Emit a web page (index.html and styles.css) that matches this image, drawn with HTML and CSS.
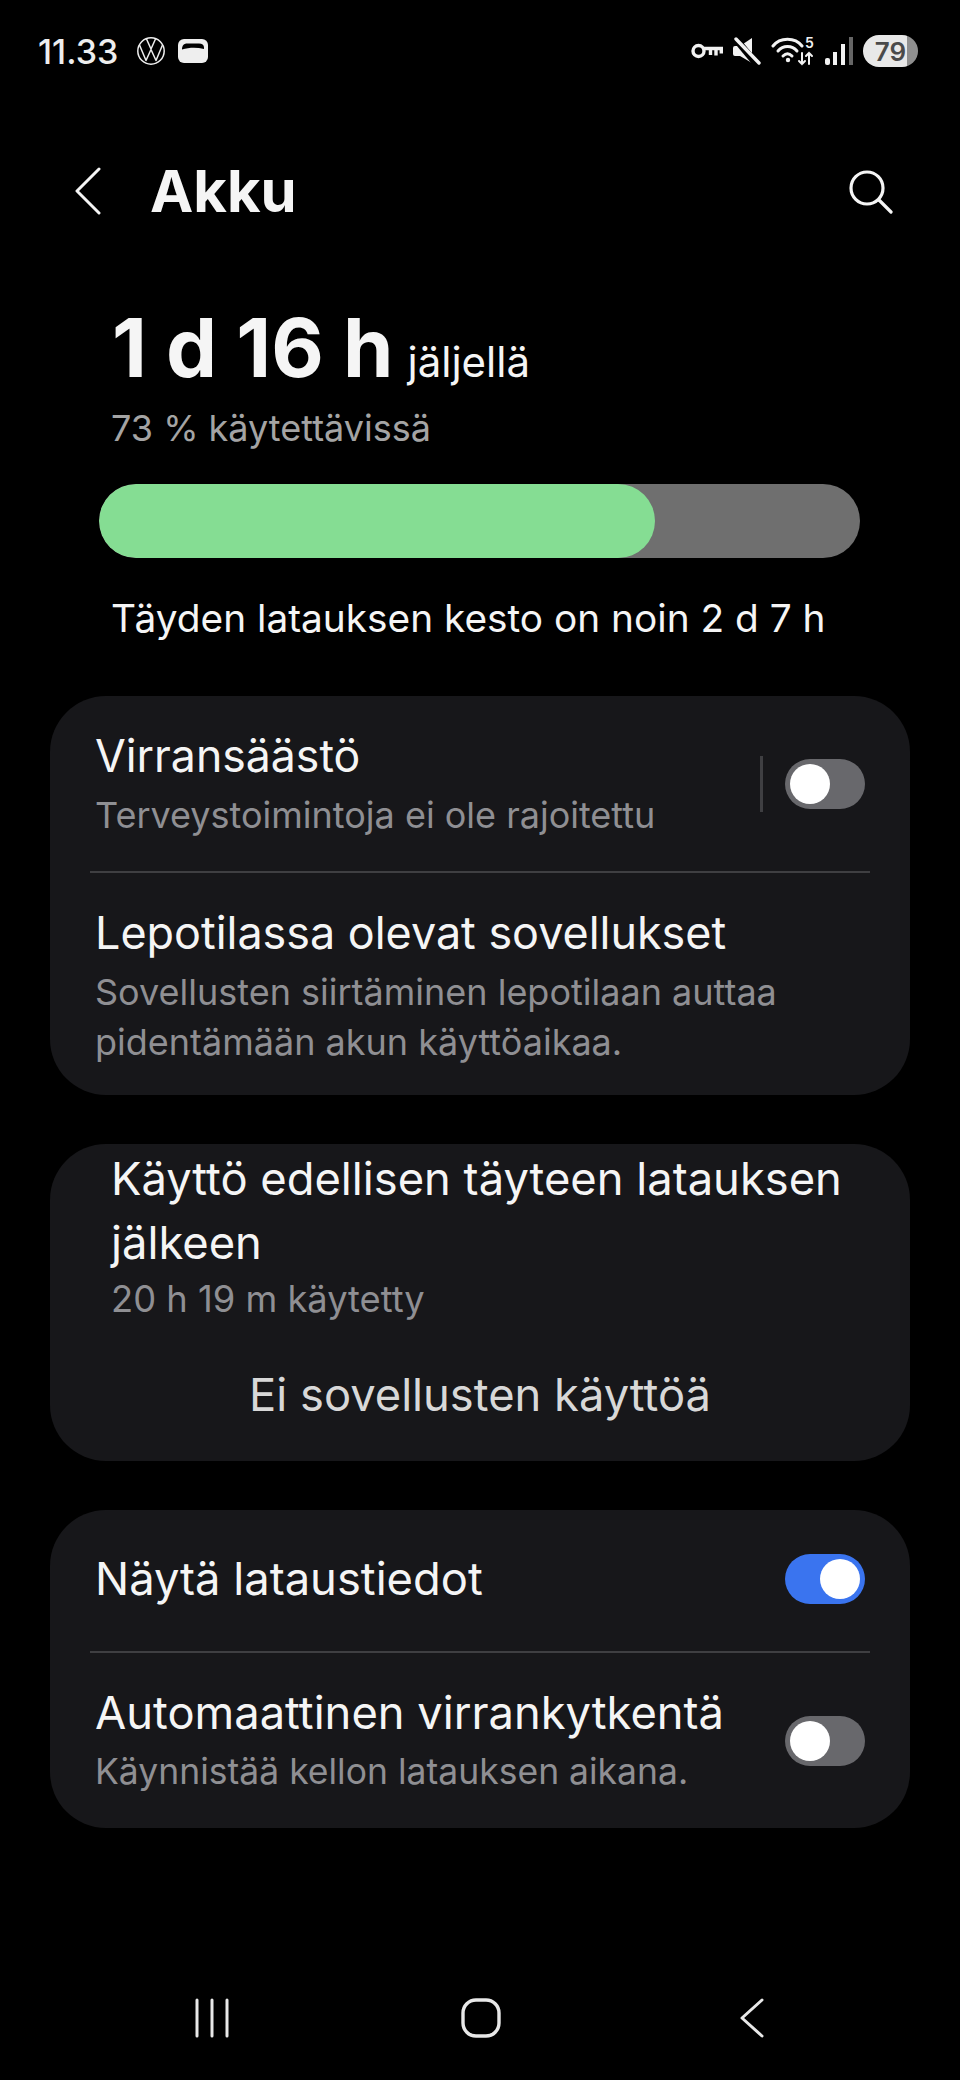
FILE: index.html

```html
<!DOCTYPE html>
<html lang="fi">
<head>
  <meta charset="UTF-8" />
  <meta name="viewport" content="width=device-width, initial-scale=1.0"/>
  <title>Akku</title>
  <link rel="stylesheet" href="styles.css">
</head>
<body>
  <div class="phone">
    <div class="status-bar">
      <div class="status-left">
        <span class="clock">11.33</span>
        <svg class="vw" width="28" height="28" viewBox="0 0 28 28" fill="none" stroke="#eee" stroke-width="1.5" stroke-linejoin="round">
          <circle cx="14" cy="14" r="13.2"/>
          <path d="M9.5 2 L14 12 L18.5 2 M2.5 8 L9 23.5 L14 12.5 L19 23.5 L25.5 8"/>
        </svg>
        <svg class="wallet" width="30" height="24" viewBox="0 0 30 24">
          <rect x="0" y="0" width="30" height="24" rx="6" fill="#eee"/>
          <path d="M4 10.5 C4 6.5 6 4.5 9 4.5 H21 C24 4.5 26 6 26 8.5 L26 10 C18 8 11 8.5 4 10.5 Z" fill="#000"/>
        </svg>
      </div>
      <div class="status-right">
        <svg width="32" height="16" viewBox="0 0 32 16" fill="none" stroke="#f2f2f2" stroke-width="3.4">
          <circle cx="7.5" cy="8" r="5.5"/>
          <path d="M13 5.5 H30.3 V10.5 M25 5.5 V12.5 M19.5 5.5 V12"/>
        </svg>
        <svg width="28" height="28" viewBox="0 0 28 28">
          <path d="M0 11 Q0 9 2 9 H7 L19 1 V26 L7 19 H2 Q0 19 0 17 Z" fill="#f2f2f2"/>
          <path d="M1 0 L26 30" stroke="#000" stroke-width="7"/>
          <path d="M3 2 L26 26" stroke="#f2f2f2" stroke-width="3.4" stroke-linecap="round"/>
        </svg>
        <svg width="44" height="36" viewBox="0 -4 44 36" fill="none" stroke="#f2f2f2" stroke-width="3" stroke-linecap="round">
          <path d="M2 9 C9 0 24 0 31 9"/>
          <path d="M7 14 C12 8 21 8 26 14"/>
          <path d="M12 19 C15 16 18 16 21 19"/>
          <circle cx="17" cy="23" r="2.2" fill="#f2f2f2" stroke="none"/>
          <path d="M31 16 V27 M28 24 L31 27 L34 24 M38 27 V16 M35 19 L38 16 L41 19" stroke-width="2"/>
          <text x="34" y="11" class="wifi-num" fill="#f2f2f2" stroke="none">5</text>
        </svg>
        <svg width="28" height="28" viewBox="0 0 28 28">
          <rect x="0" y="21" width="5" height="7" rx="2" fill="#f2f2f2"/>
          <rect x="8" y="15" width="4" height="13" fill="#f2f2f2"/>
          <rect x="16" y="7" width="4" height="21" fill="#f2f2f2"/>
          <rect x="24" y="0" width="4" height="28" fill="#666"/>
        </svg>
        <div class="battery"><span class="battery-num">79</span></div>
      </div>
    </div>

    <div class="app-bar">
      <svg class="back" width="30" height="48" viewBox="0 0 30 48" fill="none" stroke="#f5f5f5" stroke-width="3" stroke-linecap="round" stroke-linejoin="round">
        <path d="M25 2 L3 24 L25 46"/>
      </svg>
      <h1>Akku</h1>
      <svg class="search" width="46" height="46" viewBox="0 0 46 46" fill="none" stroke="#f5f5f5" stroke-width="3.2" stroke-linecap="round">
        <circle cx="20" cy="20" r="16"/>
        <path d="M32 32 L44 44"/>
      </svg>
    </div>

    <div class="summary">
      <div class="remaining"><span class="big">1 d 16 h</span> <span class="left">jäljellä</span></div>
      <div class="usable">73 % käytettävissä</div>
      <div class="bar"><div class="bar-fill" style="width: 73%"></div></div>
      <div class="full-time">Täyden latauksen kesto on noin 2 d 7 h</div>
    </div>

    <div class="card">
      <div class="row row-first">
        <div class="row-text">
          <div class="row-title">Virransäästö</div>
          <div class="row-sub">Terveystoimintoja ei ole rajoitettu</div>
        </div>
        <div class="vline"></div>
        <div class="toggle"></div>
      </div>
      <div class="divider"></div>
      <div class="row row-sleep">
        <div class="row-text">
          <div class="row-title">Lepotilassa olevat sovellukset</div>
          <div class="row-sub">Sovellusten siirtäminen lepotilaan auttaa<br>pidentämään akun käyttöaikaa.</div>
        </div>
      </div>
    </div>

    <div class="card card-usage">
      <div class="usage-title">Käyttö edellisen täyteen latauksen jälkeen</div>
      <div class="row-sub usage-sub">20 h 19 m käytetty</div>
      <div class="usage-empty">Ei sovellusten käyttöä</div>
    </div>

    <div class="card">
      <div class="row row-info">
        <div class="row-text">
          <div class="row-title">Näytä lataustiedot</div>
        </div>
        <div class="toggle on"></div>
      </div>
      <div class="divider"></div>
      <div class="row row-auto">
        <div class="row-text">
          <div class="row-title">Automaattinen virrankytkentä</div>
          <div class="row-sub">Käynnistää kellon latauksen aikana.</div>
        </div>
        <div class="toggle"></div>
      </div>
    </div>

    <div class="nav-bar">
      <svg width="34" height="40" viewBox="0 0 34 40" fill="none" stroke="#e8e8e8" stroke-width="3" stroke-linecap="round">
        <path d="M2 2 V38 M17 2 V38 M32 2 V38"/>
      </svg>
      <svg class="nav-home" width="40" height="40" viewBox="0 0 40 40" fill="none" stroke="#e8e8e8" stroke-width="3.4">
        <rect x="2" y="2" width="36" height="36" rx="13"/>
      </svg>
      <svg width="26" height="40" viewBox="0 0 26 40" fill="none" stroke="#e8e8e8" stroke-width="3" stroke-linecap="round" stroke-linejoin="round">
        <path d="M24 2 L4 20 L24 38"/>
      </svg>
    </div>
  </div>
</body>
</html>
```

FILE: styles.css

```css
* {
  box-sizing: border-box;
}

body {
  margin: 0;
  background-color: #000000;
  color: #f5f5f5;
  font-family: "Inter", "Liberation Sans", sans-serif;
}

.phone {
  width: 960px;
  height: 2080px;
  padding-top: 31px;
  overflow: hidden;
}

.status-bar {
  display: flex;
  justify-content: space-between;
  align-items: center;
  height: 40px;
  padding: 0 42px 0 38px;
}

.status-left,
.status-right {
  display: flex;
  align-items: center;
}

.clock {
  font-size: 34px;
  font-weight: 500;
  color: #eeeeee;
  margin-right: 19px;
}

.wallet {
  margin-left: 13px;
}

.status-right {
  gap: 10px;
}

.wifi-num {
  font-size: 14px;
  font-weight: 600;
}

.battery {
  width: 55px;
  height: 32px;
  border-radius: 16px;
  background: linear-gradient(to right, #e8e8e8 80%, #8f8f8f 80%);
  display: flex;
  align-items: center;
  justify-content: center;
}

.battery-num {
  font-size: 26px;
  font-weight: 600;
  color: #4a4a4a;
}

.app-bar {
  display: flex;
  align-items: center;
  height: 60px;
  margin-top: 90px;
  padding: 0 67px 0 74px;
}

.app-bar h1 {
  margin: 0 0 0 46px;
  font-size: 58px;
  font-weight: 700;
  flex: 1;
}

.summary {
  padding: 0 50px;
  margin-top: 82px;
}

.remaining {
  padding-left: 62px;
  display: flex;
  align-items: baseline;
  gap: 14px;
  height: 90px;
}

.big {
  font-size: 81px;
  font-weight: 700;
  line-height: 90px;
}

.left {
  font-size: 42px;
}

.usable {
  padding-left: 61px;
  font-size: 36px;
  color: #a4a4a4;
  margin-top: 11px;
  line-height: 48px;
}

.bar {
  margin: 32px 0 0 49px;
  width: 761px;
  height: 74px;
  border-radius: 37px;
  background-color: #6f6f6f;
  overflow: hidden;
}

.bar-fill {
  height: 100%;
  border-radius: 37px;
  background-color: #85dd93;
}

.full-time {
  padding-left: 61px;
  margin-top: 35px;
  font-size: 38.8px;
  line-height: 50px;
}

.card {
  margin: 49px 50px 0;
  background-color: #17171a;
  border-radius: 56px;
}

.summary + .card {
  margin-top: 53px;
}

.row {
  display: flex;
  align-items: center;
  padding: 0 45px;
}

.row-text {
  flex: 1;
}

.row-title {
  font-size: 45.3px;
  line-height: 58px;
  color: #f5f5f5;
}

.row-sub {
  font-size: 36px;
  line-height: 50px;
  margin-top: 5px;
  color: #8f8f93;
}

.row-first {
  height: 175px;
}

.row-first .row-title {
  font-size: 44.6px;
}

.row-sleep {
  height: 222px;
  padding-top: 3px;
}

.row-sleep .row-title {
  font-size: 44.9px;
}

.row-info {
  height: 141px;
  padding-bottom: 4px;
}

.row-auto {
  height: 175px;
}

.row-auto .row-sub {
  font-size: 35.5px;
}

.vline {
  width: 3px;
  height: 56px;
  background-color: #3f3f42;
  margin-right: 22px;
}

.divider {
  height: 2px;
  margin: 0 40px;
  background-color: #3f3f42;
}

.toggle {
  position: relative;
  width: 80px;
  height: 50px;
  border-radius: 25px;
  background-color: #68686c;
}

.toggle::after {
  content: "";
  position: absolute;
  top: 5px;
  left: 5px;
  width: 40px;
  height: 40px;
  border-radius: 50%;
  background-color: #ffffff;
}

.toggle.on {
  background-color: #3a74ef;
}

.toggle.on::after {
  left: 35px;
}

.card-usage {
  height: 317px;
  padding: 0 50px 0 61px;
}

.usage-title {
  font-size: 45.3px;
  line-height: 64px;
  padding-top: 3px;
}

.usage-sub {
  font-size: 36.3px;
  line-height: 48px;
  margin-top: 0;
}

.usage-empty {
  margin: 42px 0 0 -11px;
  text-align: center;
  font-size: 45.3px;
  line-height: 60px;
  color: #d8d8d8;
}

.nav-bar {
  display: flex;
  justify-content: space-between;
  align-items: center;
  margin-top: 170px;
  padding: 0 196px 0 195px;
}

.nav-home {
  margin-right: 5px;
}
```
